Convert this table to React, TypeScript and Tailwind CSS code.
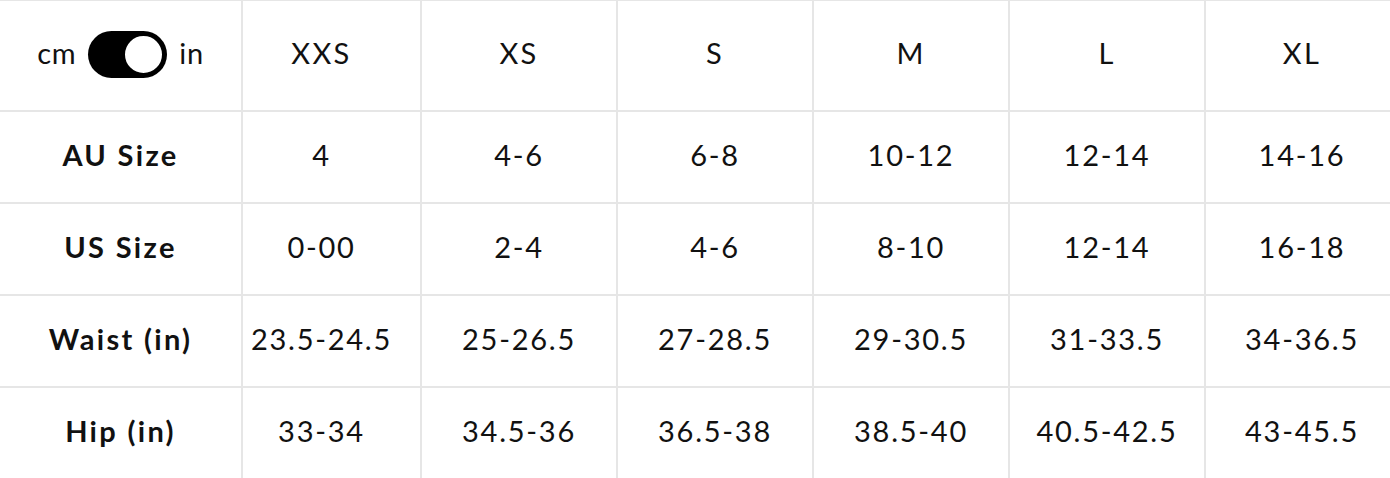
import React from 'react';

const sizes = ['XXS', 'XS', 'S', 'M', 'L', 'XL'];

const rows = [
  { label: 'AU Size', values: ['4', '4-6', '6-8', '10-12', '12-14', '14-16'] },
  { label: 'US Size', values: ['0-00', '2-4', '4-6', '8-10', '12-14', '16-18'] },
  { label: 'Waist (in)', values: ['23.5-24.5', '25-26.5', '27-28.5', '29-30.5', '31-33.5', '34-36.5'] },
  { label: 'Hip (in)', values: ['33-34', '34.5-36', '36.5-38', '38.5-40', '40.5-42.5', '43-45.5'] },
];

// column padding so the text sits where the original does
const colPad = ['pr-[20px]', '', '', '', '', 'pl-[8px]'];

// Unit switch (cm / in)
const UnitToggle = () => (
  <div className="flex items-center gap-3">
    <span className="text-[29px] leading-none pb-1 tracking-wide">cm</span>
    <div className="w-[79px] h-[47px] rounded-full bg-black flex items-center justify-end pr-[2px]">
      <div className="w-[43px] h-[43px] rounded-full bg-white border-[3px] border-black"></div>
    </div>
    <span className="text-[29px] leading-none pb-1 tracking-wide">in</span>
  </div>
);

export default function App() {
  return (
    <div
      className="w-[1390px] h-[478px] bg-white text-[#111] overflow-hidden"
      style={{ fontFamily: 'Lato, "Open Sans", sans-serif' }}
    >
      <div className="grid grid-cols-[241px_179px_196px_196px_196px_196px_186px] grid-rows-[109px_92px_92px_92px_92px] border-t border-[#e6e6e6]">
        <div className="flex items-center justify-center pb-[3px]">
          <UnitToggle />
        </div>
        {sizes.map((s, i) => (
          <div key={s} className={`flex items-center justify-center border-l-2 border-[#e6e6e6] text-[29px] tracking-[0.08em] pb-[5px] ${colPad[i]}`}>
            {s}
          </div>
        ))}

        {rows.map((r) => (
          <React.Fragment key={r.label}>
            <div className="flex items-center justify-center border-t-2 border-[#e6e6e6] text-[29px] font-bold tracking-[0.08em] pb-[4px]">
              {r.label}
            </div>
            {r.values.map((v, i) => (
              <div key={i} className={`flex items-center justify-center border-t-2 border-l-2 border-[#e6e6e6] text-[29px] tracking-[0.06em] pb-[4px] ${colPad[i]}`}>
                {v}
              </div>
            ))}
          </React.Fragment>
        ))}
      </div>
    </div>
  );
}
